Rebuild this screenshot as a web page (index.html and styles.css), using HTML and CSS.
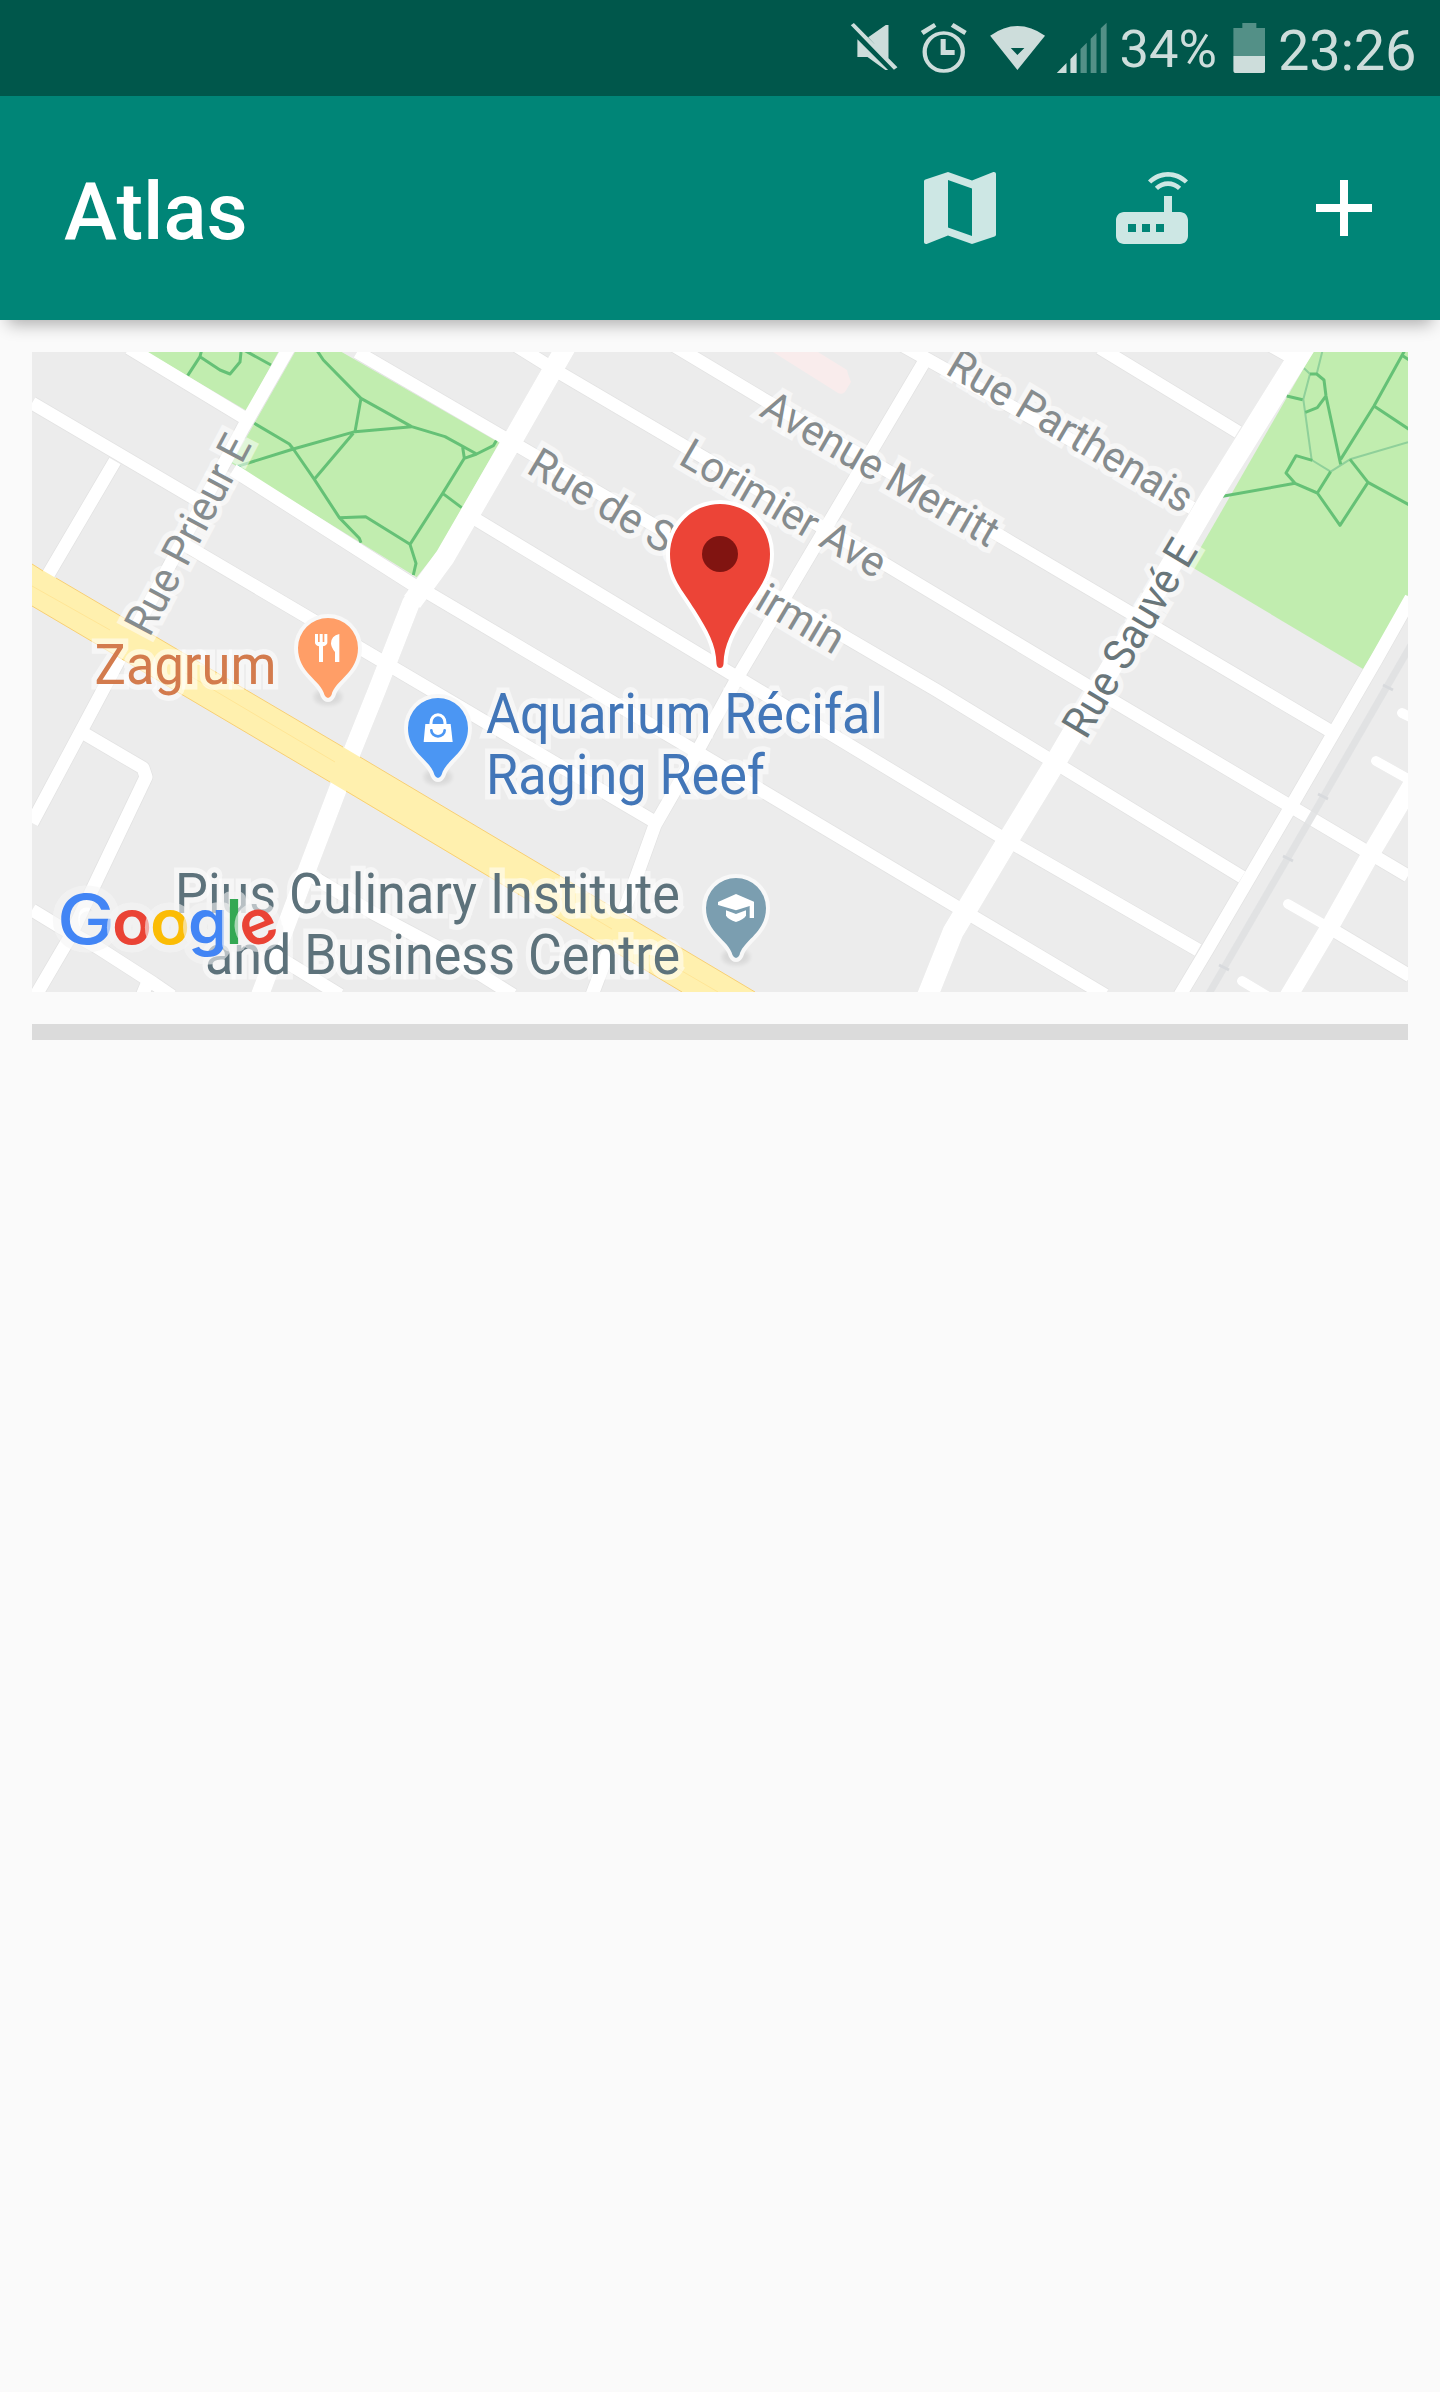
FILE: index.html
```html
<!DOCTYPE html>
<html lang="en">
<head>
<meta charset="utf-8">
<title>Atlas</title>
<link rel="stylesheet" href="styles.css">
</head>
<body>
<header>
  <div class="status">
    <svg class="mute" viewBox="50 60 125 165" preserveAspectRatio="none"><path d="M60 69L172 202L163 209L52 76ZM97 112L142 75H149V176ZM69 118L148 210H141L95 171H69Z"/></svg>
    <svg class="alarm" viewBox="232 60 122 165" preserveAspectRatio="none"><path d="M234 93L268 69L274 80L241 105ZM318 69L352 93L346 105L311 80ZM285 117H298V150H321V165H285Z"/><ellipse class="ring" cx="293" cy="156" rx="49" ry="57"/></svg>
    <svg class="wifi" viewBox="410 60 146 165" preserveAspectRatio="none"><path fill-rule="evenodd" d="M413 107Q483 49 554 107L483 210ZM466 144L483 165L501 144Z"/></svg>
    <svg class="signal" viewBox="582 60 132 165" preserveAspectRatio="none"><path d="M584 219L609 189V219ZM619 219V177L635 158V219Z"/><path class="dim" d="M645 219V147L661 128V219ZM671 219V116L686 99V219ZM697 219V85L712 68V219Z"/></svg>
    <span class="percent">34%</span>
    <svg class="battery" viewBox="1035 60 84 165" preserveAspectRatio="none"><path class="dim" d="M1036 168V84H1059V69H1095V84H1118V168Z"/><path d="M1036 168H1118V212Q1118 219 1111 219H1043Q1036 219 1036 212Z"/></svg>
    <span class="time">23:26</span>
  </div>
  <div class="appbar">
    <h1>Atlas</h1>
    <nav>
      <svg class="soft" viewBox="0 0 24 24"><path d="M20.5 3l-.16.03L15 5.1 9 3 3.36 4.9c-.21.07-.36.25-.36.48V20.5c0 .28.22.5.5.5l.16-.03L9 18.9l6 2.1 5.64-1.9c.21-.07.36-.25.36-.48V3.5c0-.28-.22-.5-.5-.5zM15 19l-6-2.11V5l6 2.11V19z"/></svg>
      <svg class="soft" viewBox="0 0 24 24"><path d="M20.2 5.9l.8-.8C19.6 3.7 17.8 3 16 3s-3.6.7-5 2.1l.8.8C13 4.8 14.5 4.2 16 4.2s3 .6 4.2 1.7zm-.9.8c-.9-.9-2.1-1.4-3.3-1.4s-2.4.5-3.3 1.4l.8.8c.7-.7 1.6-1 2.5-1s1.8.3 2.5 1l.8-.8zM19 13h-2V9h-2v4H5c-1.1 0-2 .9-2 2v4c0 1.1.9 2 2 2h14c1.1 0 2-.9 2-2v-4c0-1.1-.9-2-2-2zM8 18H6v-2h2v2zm3.5 0h-2v-2h2v2zm3.5 0h-2v-2h2v2z"/></svg>
      <svg viewBox="0 0 24 24"><path d="M19 13h-6v6h-2v-6H5v-2h6V5h2v6h6v2z"/></svg>
    </nav>
  </div>
</header>
<main>
  <svg class="map" viewBox="32 352 1376 640">
    <defs>
      <path id="pin" d="M-30 0A30 30 0 0 1 30 0C30 25 7 32 3.500 47Q2 50 0 50Q-2 50 -3.500 47C-7 32 -30 25 -30 0Z"/>
      <g id="roads">
        <path d="M129 348L243 417M32 403L202 503M115 461L48 575M233 470L415 586M180 542L655 822M357 352L503 437L936 690L1242 877M515 345L560 373L883 563L1113 701L1408 876M673 345L763 399L1002 537L1332 732M900 344L1192 508M1100 348L1238 432M1268 344L1293 358M467 514L730 673L998 835L1198 950M420 588L697 752L957 907L1105 995"/>
        <path d="M290 346L243 428L119 660L32 823M85 734L143 768L146 777L92 890L70 937L36 995M32 910L60 927L97 947L153 983L172 996M147 984L142 996M270 952L340 995M305 872L373 913L437 947L513 995M927 357L740 673L697 752L655 825L628 900L592 995M1411 598L1376 660L1293 803L1207 950L1180 995"/>
        <path d="M1323 924L1410 976"/>
        <path class="w10" d="M1402 713L1414 719M1376 761L1408 779M1288 904L1323 924M1242 981L1267 996"/>
        <path class="w20" d="M567 345L511 443L445 557L412 602"/>
        <path class="w18" d="M445 557L411 603L377 690L352 752L307 870L260 995M1420 771L1373 850L1332 923L1288 997"/>
        <path class="w22" d="M1307 343L1211 497L1055 763L1008 840L965 912L953 932L927 997"/>
      </g>
    </defs>
    <rect class="land" x="32" y="352" width="1376" height="640"/>
    <path class="hospital" d="M773 352H818L847 370L848 374L851 382L845 392Q842 395 838 393Z"/>
    <use href="#roads" class="casing"/>
    <g transform="translate(20 340) scale(.33333)">
      <path class="park" d="M380 36H775L680 212ZM825 36H965L1438 308L1255 630L1190 712L635 370Z"/>
    </g>
    <path class="park" d="M1313 352H1408V595L1363 669L1190 566Z"/>
    <g class="trail" transform="translate(20 340) scale(.33333)">
      <path d="M545 30L540 50L503 107M540 50L600 90L630 102L660 66L663 36M675 32L753 75M890 30L910 60L1023 175L1175 260L1275 290L1370 342L1420 317L1430 300M1023 175L1005 275L1175 260M1005 275L820 327L650 380M703 250L808 312L820 327L883 418L958 533L1018 595L1023 608M1000 280L883 418M958 533L1037 530L1170 613L1188 670L1180 705M1170 613L1268 460L1333 355L1328 322M1333 355L1370 342M1268 460L1325 503"/>
    </g>
    <g class="trail" transform="translate(940 340) scale(.33333)">
      <path class="faint" d="M1148 30L1130 102M1092 85L1110 102L1090 178L1115 360L1172 395L1230 358L1404 307"/>
      <path d="M1040 168L1088 179M1110 102H1130L1152 120L1158 168L1202 373M1158 168L1132 203L1096 217M1395 30L1302 198L1202 358M1388 47L1410 62M1302 198L1410 270M848 469L1065 430L1132 459L1200 556L1284 427L1230 358M1284 427L1410 496M1065 430L1038 399L1068 347L1117 361M1132 459L1172 395"/>
    </g>
    <use href="#roads" class="surface"/>
    <path class="rail" d="M1411 645L1318 806L1207 997"/>
    <path class="ties" d="M1383 685L1393 690M1318 794L1328 799M1283 856L1293 861M1219 965L1229 970"/>
    <path class="highway" d="M32 564L343 747L755 992H682L330 782L32 606Z"/>
    <path class="highway-line" d="M32 564L43 571M56 578L343 747M360 757L755 992M682 992L346 791M330 782L32 606"/>
    <path class="median" d="M32 586L110 630M185 673L335 762M580 910L612 929M675 967L718 992"/>

    <g class="street">
      <text transform="translate(149.500 638) rotate(-62)" textLength="219" lengthAdjust="spacingAndGlyphs">Rue Prieur E</text>
      <text class="major" transform="translate(1086 740.500) rotate(-59.300)" textLength="221" lengthAdjust="spacingAndGlyphs">Rue Sauvé E</text>
      <text transform="translate(944 373) rotate(30.600)" textLength="277" lengthAdjust="spacingAndGlyphs">Rue Parthenais</text>
      <text transform="translate(758 415) rotate(30)" textLength="266" lengthAdjust="spacingAndGlyphs">Avenue Merritt</text>
      <text transform="translate(677 463) rotate(30.300)" textLength="230" lengthAdjust="spacingAndGlyphs">Lorimier Ave</text>
      <text transform="translate(525 472) rotate(30.700)" textLength="359" lengthAdjust="spacingAndGlyphs">Rue de Saint-Firmin</text>
    </g>
    <g class="poi">
      <text class="food" x="94.500" y="683.500" textLength="182" lengthAdjust="spacingAndGlyphs">Zagrum</text>
      <text class="shop" x="486" y="732.700" textLength="397" lengthAdjust="spacingAndGlyphs">Aquarium Récifal</text>
      <text class="shop" x="486" y="794" textLength="279" lengthAdjust="spacingAndGlyphs">Raging Reef</text>
      <text class="school" x="175" y="912.700" textLength="505" lengthAdjust="spacingAndGlyphs">Pius Culinary Institute</text>
      <text class="school" x="205" y="974" textLength="475" lengthAdjust="spacingAndGlyphs">and Business Centre</text>
    </g>

    <g class="shade"><ellipse cx="328" cy="697" rx="14" ry="8"/><ellipse cx="438" cy="777" rx="14" ry="8"/><ellipse cx="736" cy="957" rx="14" ry="8"/></g>
    <g class="pin">
      <use href="#pin" transform="translate(328 648)" fill="#ff9e67"/>
      <use href="#pin" transform="translate(438 728)" fill="#4b96f3"/>
      <use href="#pin" transform="translate(736 908)" fill="#7b9eb0"/>
    </g>
    <g fill="#fff">
      <path transform="translate(20 340) scale(.33333)" d="M885 882h9v24h5v-24h9v24h5v-24h9v26q0 7-13 11v47h-12v-47q-12-4-12-11zM958 882v84h-13v-30q-12-14-12-26q0-22 25-28z"/>
      <g transform="translate(20 660) scale(.33333)"><path d="M1216 192H1292L1298 246H1211Z"/><path class="handle" d="M1233 200V188A21 24 0 0 1 1275 188V200"/><path class="smile" d="M1234 211A20 18 0 0 0 1274 211"/></g>
      <path transform="translate(480 660) scale(.33333)" d="M768 702L822 725V774H809V738L768 751L714 735V726ZM738 751L768 762L798 751V767Q790 779 768 786Q746 779 738 767Z"/>
    </g>
    <g transform="translate(720 554)">
      <path class="marker" d="M-50 0A50 50 0 0 1 50 0C50 24 38 35 25 56C12 77 4 90 3.500 110Q3 114 0 114Q-3 114 -3.500 110C-4 90 -12 77 -25 56C-38 35 -50 24 -50 0Z"/>
      <circle r="18" fill="#811411"/>
    </g>
    <g class="google">
      <text class="cap" x="57" y="943.500" fill="#4285f5" textLength="58" lengthAdjust="spacingAndGlyphs">G</text>
      <text x="112" y="943.500" fill="#ea4335" textLength="40" lengthAdjust="spacingAndGlyphs">o</text>
      <text x="150" y="943.500" fill="#fbbc05" textLength="40" lengthAdjust="spacingAndGlyphs">o</text>
      <text x="188" y="943.500" fill="#4285f5" textLength="40" lengthAdjust="spacingAndGlyphs">g</text>
      <text x="225.500" y="943.500" fill="#34a853" textLength="17" lengthAdjust="spacingAndGlyphs">l</text>
      <text transform="rotate(-22 259 927)" x="240" y="943.500" fill="#ea4335" textLength="37" lengthAdjust="spacingAndGlyphs">e</text>
    </g>
  </svg>
  <div class="divider"></div>
</main>
</body>
</html>
```
FILE: styles.css
```css
body {
  margin: 0;
  min-height: 2392px;
  background: #fafafa;
  font-family: Roboto, "Liberation Sans", sans-serif;
}

svg { display: block; }

.status {
  display: flex;
  box-sizing: border-box;
  height: 96px;
  padding-left: 849.5px;
  background: #00574b;
  color: #cddddb;
  fill: #cddddb;
  line-height: 98px;
}
.status svg { flex: none; height: 55px; margin-top: 20px; }
.status .dim { fill: #539087; }
.mute { width: 48.6px; }
.alarm { width: 47.5px; margin-left: 22.2px; }
.wifi { width: 56.8px; margin-left: 21.7px; }
.signal { width: 51.4px; margin-left: 10.1px; }
.battery { width: 32.7px; }
.ring { fill: none; stroke: #cddddb; stroke-width: 11; }
.percent { width: 113.1px; margin-left: 11.7px; font-size: 52.5px; }
.time { margin-left: 12.7px; font-size: 56px; line-height: 102px; letter-spacing: -.2px; }
.percent, .time { flex: none; white-space: nowrap; }

.appbar {
  display: flex;
  align-items: center;
  justify-content: space-between;
  box-sizing: border-box;
  height: 224px;
  padding: 0 48px 0 64px;
  background: #008577;
  box-shadow: 0 12px 16px -8px rgba(0, 0, 0, .32);
}
.appbar h1 {
  margin: 7px 0 0;
  color: #fff;
  font-size: 80px;
  font-weight: 500;
}
.appbar nav { display: flex; gap: 96px; }
.appbar nav svg { width: 96px; height: 96px; fill: #fff; }
.appbar nav .soft { fill: #cde7e4; }

main { padding: 32px; }
.map { width: 1376px; height: 640px; overflow: hidden; }
.divider { height: 16px; margin-top: 32px; background: #dbdbdb; }

.land { fill: #ececec; }
.hospital { fill: #f9ecec; }
.park { fill: #c1edaf; }

#roads { fill: none; stroke-linejoin: round; }
.surface { stroke: #fff; stroke-width: 13px; }
.casing { stroke: #e3e3e3; stroke-width: 14.5px; }
.w10 { stroke-width: 10px; stroke-linecap: round; }
.w18 { stroke-width: 18px; }
.w20 { stroke-width: 20px; }
.w22 { stroke-width: 21px; }

.trail { fill: none; stroke: #65c176; stroke-width: 9; stroke-linejoin: round; }
.faint { stroke: #8fd09a; stroke-width: 6; }
.rail { fill: none; stroke: #dfe0e2; stroke-width: 7; stroke-opacity: .85; }
.ties { stroke: #d8dadd; stroke-width: 3; }
.highway { fill: #fff0ae; }
.highway-line { fill: none; stroke: #f8cf73; stroke-width: 1; }
.median { fill: none; stroke: #ffe596; stroke-width: 1; }

.street text, .poi text {
  paint-order: stroke;
  stroke: rgba(255, 255, 255, .53);
  stroke-width: 11px;
  stroke-linejoin: miter;
  stroke-miterlimit: 2;
}
.street { font-size: 43px; fill: #868c8e; }
.street .major { fill: #69767a; }
.poi { font-size: 55px; }
.food { fill: #d37b4d; }
.shop { fill: #4276b8; }
.school { fill: #5d727b; }

.shade { fill: #000; opacity: .08; filter: blur(2px); }
.pin { stroke: #f8f8f8; stroke-width: 8; paint-order: stroke; }
.handle { fill: none; stroke: #fff; stroke-width: 9; }
.smile { fill: none; stroke: #4b96f3; stroke-width: 8; stroke-linecap: round; }
.marker { fill: #ec4437; stroke: #fff; stroke-width: 8; paint-order: stroke; }

.google {
  font-family: Inter, Roboto, sans-serif;
  font-size: 62px;
  font-weight: 600;
}
.google text {
  paint-order: stroke;
  stroke: rgba(245, 245, 245, .6);
  stroke-width: 15px;
  stroke-linejoin: round;
}
.google .cap { font-size: 69px; font-weight: 500; }
```
